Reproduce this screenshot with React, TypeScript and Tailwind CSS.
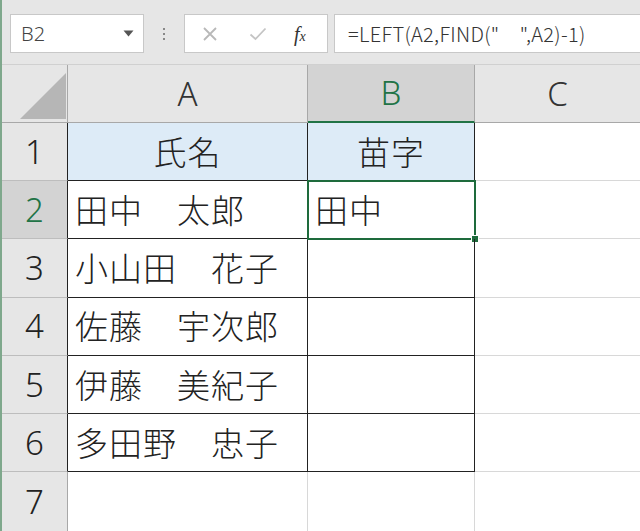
const rows = [
  { n: 1, a: '氏名', b: '苗字', head: true },
  { n: 2, a: '田中　太郎', b: '田中', head: false },
  { n: 3, a: '小山田　花子', b: '', head: false },
  { n: 4, a: '佐藤　宇次郎', b: '', head: false },
  { n: 5, a: '伊藤　美紀子', b: '', head: false },
  { n: 6, a: '多田野　忠子', b: '', head: false },
];

const jp = "font-['Noto_Sans_CJK_JP','Noto_Sans',sans-serif] font-light";
const latin = "font-['Noto_Sans','Noto_Sans_CJK_JP',sans-serif] font-light";

function Toolbar() {
  return (
    <div className="h-[65px] bg-[#e6e6e6] border-b border-[#d0d0d0] flex items-center pt-[3px]">
      {/* name box */}
      <div className="ml-[8px] w-[134px] h-[39px] bg-white border border-[#c8c8c8] flex items-center justify-between pl-[10px] pr-[9px]">
        <span className={`${latin} text-[20px] text-[#444] leading-none`}>B2</span>
        <svg width="11" height="7" viewBox="0 0 11 7">
          <path d="M0.5 0.5 L10.5 0.5 L5.5 6.5 Z" fill="#555" />
        </svg>
      </div>
      {/* grip dots */}
      <div className="w-[40px] flex flex-col items-center gap-[3px]">
        <div className="w-[2px] h-[2px] bg-[#888]" />
        <div className="w-[2px] h-[2px] bg-[#888]" />
        <div className="w-[2px] h-[2px] bg-[#888]" />
      </div>
      {/* cancel / enter / fx */}
      <div className="w-[144px] h-[39px] bg-white border border-[#c8c8c8] flex items-center">
        <svg className="ml-[17px]" width="16" height="16" viewBox="0 0 16 16">
          <path d="M2 2 L14 14 M14 2 L2 14" stroke="#b8b8b8" strokeWidth="1.8" />
        </svg>
        <svg className="ml-[31px]" width="18" height="14" viewBox="0 0 18 14">
          <path d="M1.5 7.5 L6.5 12 L16.5 1.5" stroke="#c4c4c4" strokeWidth="1.8" fill="none" />
        </svg>
        <span className="ml-[27px] font-['Liberation_Serif',serif] italic text-[20px] text-[#333] leading-none">
          f<span className="text-[14px]">x</span>
        </span>
      </div>
      <div className="w-[6px]" />
      {/* formula bar */}
      <div className="flex-1 h-[39px] bg-white border-y border-l border-[#c8c8c8] flex items-center pl-[13px]">
        <span className={`${jp} text-[20px] text-[#333] leading-none tracking-[0.3px]`}>
          =LEFT(A2,FIND("　",A2)-1)
        </span>
      </div>
    </div>
  );
}

export default function App() {
  return (
    <div className="w-[640px] h-[531px] overflow-hidden bg-white border-l-2 border-[#7fa88c]">
      <Toolbar />
      <div className="grid grid-cols-[66px_240px_167px_1fr]">
        {/* column headers */}
        <div className="h-[58px] bg-[#e6e6e6] border-r border-b border-[#a8a8a8] relative">
          <svg className="absolute left-[18px] top-[8px]" width="46" height="46" viewBox="0 0 46 46">
            <path d="M46 0 L46 46 L0 46 Z" fill="#b6b6b6" />
          </svg>
        </div>
        <div className={`h-[58px] bg-[#e6e6e6] border-r border-b border-[#a8a8a8] flex items-center justify-center ${latin} text-[33px] text-[#333]`}>
          A
        </div>
        <div className={`h-[58px] bg-[#d3d3d3] border-r border-[#a8a8a8] border-b-2 border-b-[#217346] flex items-center justify-center ${latin} text-[33px] text-[#217346]`}>
          B
        </div>
        <div className={`h-[58px] bg-[#e6e6e6] border-b border-[#a8a8a8] flex items-center justify-center ${latin} text-[33px] text-[#333]`}>
          C
        </div>

        {rows.map((r) => {
          const sel = r.n === 2;
          return [
            <div
              key={`h${r.n}`}
              className={`h-[58.2px] border-b border-[#bdbdbd] border-r border-r-[#222] flex items-center justify-center ${latin} text-[33px] ${
                sel ? 'bg-[#d3d3d3] text-[#217346]' : 'bg-[#e6e6e6] text-[#222]'
              }`}
            >
              {r.n}
            </div>,
            <div
              key={`a${r.n}`}
              className={`h-[58.2px] border-r border-b border-[#222] flex items-center ${jp} text-[33px] tracking-[1px] text-[#222] ${
                r.head ? 'bg-[#ddebf7] justify-center' : 'pl-[7px]'
              }`}
            >
              {r.a}
            </div>,
            <div
              key={`b${r.n}`}
              className={`h-[58.2px] border-r border-b border-[#222] flex items-center relative ${jp} text-[33px] tracking-[1px] text-[#222] ${
                r.head ? 'bg-[#ddebf7] justify-center' : 'pl-[7px]'
              }`}
            >
              {r.b}
              {sel && (
                <div className="absolute -left-[1px] -top-[1px] -right-[2px] -bottom-[2px] border-2 border-[#1e6b3c]">
                  <div className="absolute -right-[5px] -bottom-[5px] w-[8px] h-[8px] bg-[#1e6b3c] border border-white" />
                </div>
              )}
            </div>,
            <div key={`c${r.n}`} className="h-[58.2px] border-b border-[#d8d8d8]" />,
          ];
        })}

        {/* row 7 */}
        <div className={`h-[59px] bg-[#e6e6e6] border-r border-[#a8a8a8] flex items-center justify-center ${latin} text-[33px] text-[#222]`}>
          7
        </div>
        <div className="h-[59px] border-r border-[#d8d8d8]" />
        <div className="h-[59px] border-r border-[#d8d8d8]" />
        <div className="h-[59px]" />
      </div>
    </div>
  );
}
